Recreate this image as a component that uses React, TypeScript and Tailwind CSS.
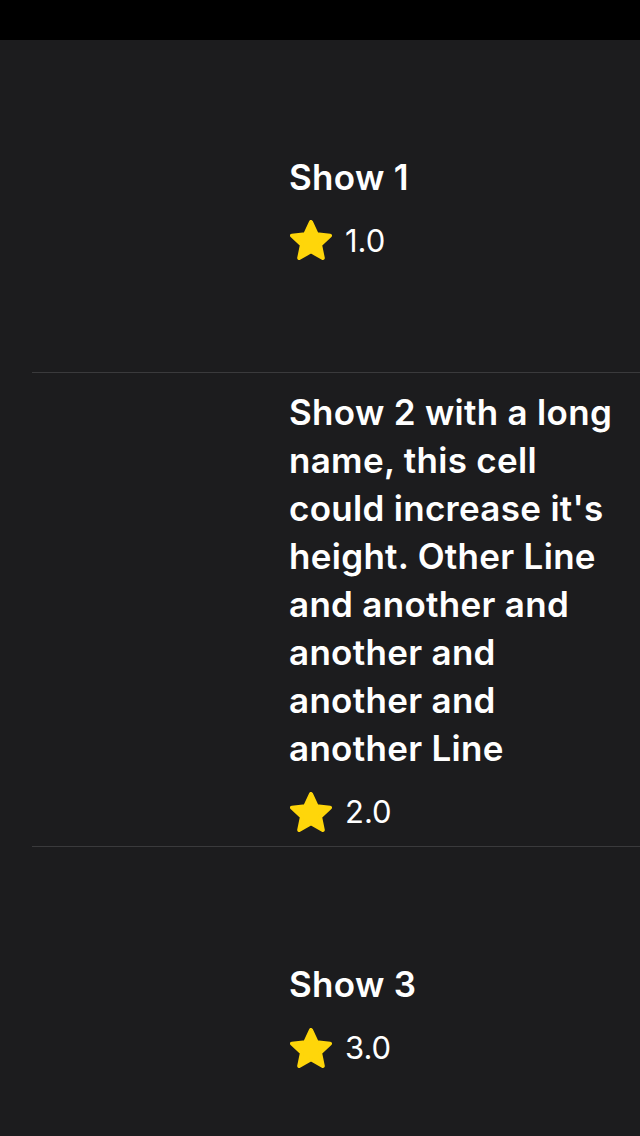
import React from 'react'

type Show = { lines: string[]; rating: string }

const shows: Show[] = [
  { lines: ['Show 1'], rating: '1.0' },
  {
    lines: [
      'Show 2 with a long',
      'name, this cell',
      "could increase it's",
      'height. Other Line',
      'and another and',
      'another and',
      'another and',
      'another Line',
    ],
    rating: '2.0',
  },
  { lines: ['Show 3'], rating: '3.0' },
]

function Star() {
  return (
    <svg width="42" height="40" viewBox="1.7 0.8 37.6 35.8" className="shrink-0">
      <path
        d="M20.5 2.5 L25.6 13.4 L37.6 14.8 L28.7 23 L31.1 34.8 L20.5 28.9 L9.9 34.8 L12.3 23 L3.4 14.8 L15.4 13.4 Z"
        fill="#ffd60a"
        stroke="#ffd60a"
        strokeWidth="3.5"
        strokeLinejoin="round"
      />
    </svg>
  )
}

function ShowRow({ show, last }: { show: Show; last: boolean }) {
  return (
    <div className={`ml-[32px] flex min-h-[333px] items-center pt-[15px] pb-[15px] ${last ? '' : 'border-b border-[#3a3a3c]'}`}>
      {/* image placeholder */}
      <div className="w-[241px] shrink-0" />
      <div className="ml-[16px] flex flex-col gap-[20px]">
        <h2 className="text-[35px] leading-[48px] font-semibold text-white tracking-[0.3px] whitespace-nowrap">
          {show.lines.map((l, i) => (
            <div key={i}>{l}</div>
          ))}
        </h2>
        <div className="flex items-center gap-[13px] h-[39px] pl-[1px]">
          <Star />
          <span className="text-[31px] leading-none font-normal text-white">{show.rating}</span>
        </div>
      </div>
    </div>
  )
}

export default function App() {
  return (
    <div className="w-[640px] h-[1136px] overflow-hidden bg-[#1c1c1e] font-['Inter','Liberation_Sans',sans-serif]">
      <div className="h-[40px] bg-black" />
      {shows.map((s, i) => (
        <ShowRow key={i} show={s} last={i === shows.length - 1} />
      ))}
    </div>
  )
}
